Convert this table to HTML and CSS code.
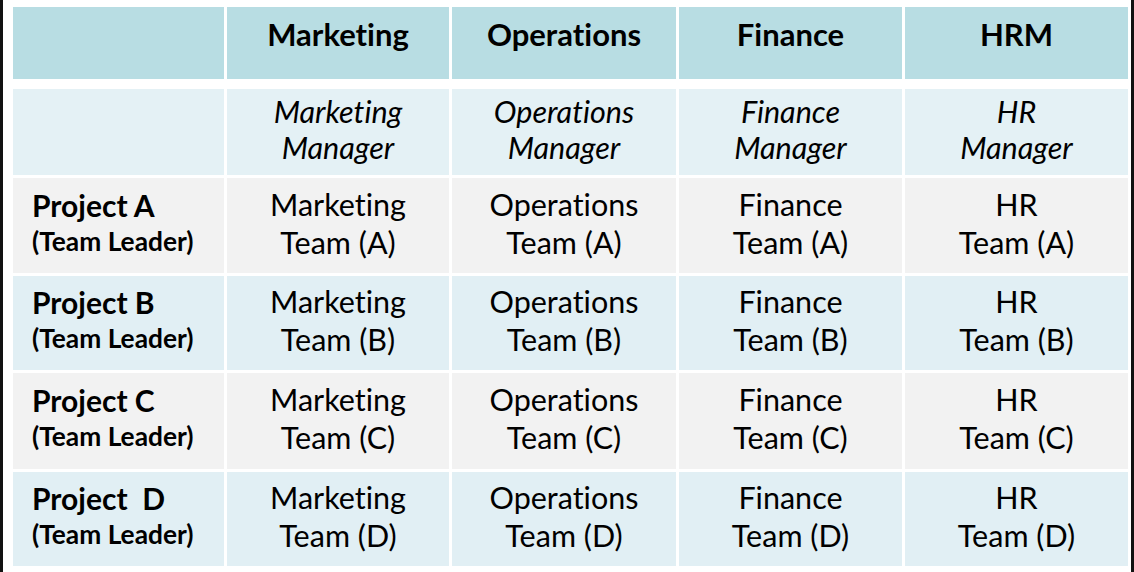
FILE: index.html
```html
<!DOCTYPE html>
<html>
<head>
<meta charset="utf-8">
<link rel="stylesheet" href="styles.css">
</head>
<body>
<div class="frame">
  <div class="matrix">
    <div class="cell head"></div>
    <div class="cell head">Marketing</div>
    <div class="cell head">Operations</div>
    <div class="cell head">Finance</div>
    <div class="cell head">HRM</div>

    <div class="cell mgr"></div>
    <div class="cell mgr">Marketing<br>Manager</div>
    <div class="cell mgr">Operations<br>Manager</div>
    <div class="cell mgr">Finance<br>Manager</div>
    <div class="cell mgr">HR<br>Manager</div>

    <div class="cell gray proj"><span class="pname">Project A</span><span class="lead">(Team Leader)</span></div>
    <div class="cell gray">Marketing<br>Team (A)</div>
    <div class="cell gray">Operations<br>Team (A)</div>
    <div class="cell gray">Finance<br>Team (A)</div>
    <div class="cell gray">HR<br>Team (A)</div>

    <div class="cell blue proj"><span class="pname">Project B</span><span class="lead">(Team Leader)</span></div>
    <div class="cell blue">Marketing<br>Team (B)</div>
    <div class="cell blue">Operations<br>Team (B)</div>
    <div class="cell blue">Finance<br>Team (B)</div>
    <div class="cell blue">HR<br>Team (B)</div>

    <div class="cell gray proj"><span class="pname">Project C</span><span class="lead">(Team Leader)</span></div>
    <div class="cell gray">Marketing<br>Team (C)</div>
    <div class="cell gray">Operations<br>Team (C)</div>
    <div class="cell gray">Finance<br>Team (C)</div>
    <div class="cell gray">HR<br>Team (C)</div>

    <div class="cell blue proj"><span class="pname">Project&nbsp; D</span><span class="lead">(Team Leader)</span></div>
    <div class="cell blue">Marketing<br>Team (D)</div>
    <div class="cell blue">Operations<br>Team (D)</div>
    <div class="cell blue">Finance<br>Team (D)</div>
    <div class="cell blue">HR<br>Team (D)</div>
  </div>
</div>
</body>
</html>
```

FILE: styles.css
```css
html, body {
  margin: 0;
  padding: 0;
  background: #ffffff;
}
body {
  width: 1134px;
  height: 572px;
  overflow: hidden;
}
.frame {
  box-sizing: border-box;
  width: 1134px;
  height: 572px;
  border-left: 3px solid #111111;
  border-right: 3px solid #111111;
  padding: 7px 3px 6px 10px;
  font-family: Lato, "Open Sans", sans-serif;
  font-variant-ligatures: none;
  color: #000000;
}
.matrix {
  display: grid;
  grid-template-columns: 211px 222px 224px 223px 223px;
  grid-template-rows: 79px 86px 95px 94px 96px 94px;
  column-gap: 3px;
  row-gap: 3px;
}
.cell {
  box-sizing: border-box;
  display: flex;
  flex-direction: column;
  align-items: center;
  justify-content: center;
  text-align: center;
  font-size: 30.5px;
  line-height: 38px;
  padding-bottom: 6px;
}
.head {
  background: #b8dde3;
  font-weight: bold;
  font-size: 31px;
  justify-content: flex-start;
  padding-top: 8px;
  padding-bottom: 0;
  margin-bottom: 7px;
}
.mgr {
  background: #e4f1f5;
  font-style: italic;
  font-size: 30.5px;
  line-height: 36px;
}
.gray { background: #f2f2f2; }
.blue { background: #e1eff4; }
.proj {
  align-items: flex-start;
  text-align: left;
  padding-left: 19px;
}
.pname {
  font-weight: bold;
  font-size: 30px;
  line-height: 36px;
}
.lead {
  font-weight: bold;
  font-size: 26.3px;
  line-height: 36px;
}
```
